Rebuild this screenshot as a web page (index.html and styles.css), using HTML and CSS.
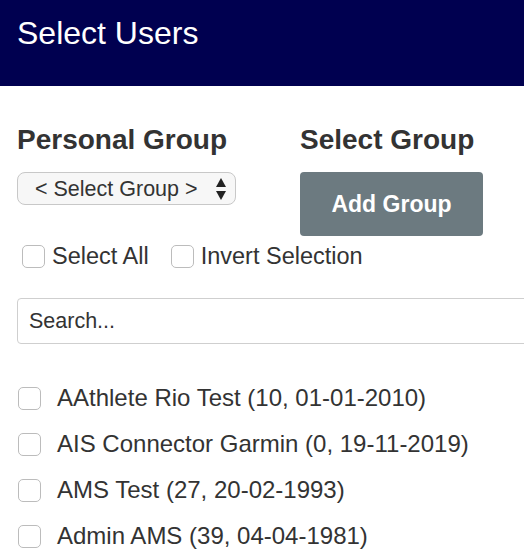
FILE: index.html
```html
<!DOCTYPE html>
<html lang="en">
<head>
  <meta charset="UTF-8" />
  <meta name="viewport" content="width=device-width, initial-scale=1.0" />
  <title>Select Users</title>
  <link rel="stylesheet" href="styles.css">
</head>
<body>

<header class="page--header">
  <h1 class="page--title">Select Users</h1>
</header>

<section class="picker">
  <div class="picker--groups">
    <div class="picker--col">
      <h3 class="picker--heading">Personal Group</h3>
      <div class="select-wrap">
        <select class="group-select">
          <option>&lt; Select Group &gt;</option>
        </select>
        <svg class="select-arrows" width="10" height="22" viewBox="0 0 10 22">
          <polygon points="5,0 10,9 0,9" fill="#222" />
          <polygon points="0,13 10,13 5,22" fill="#222" />
        </svg>
      </div>
    </div>
    <div class="picker--col">
      <h3 class="picker--heading">Select Group</h3>
      <button class="add-group">Add Group</button>
    </div>
  </div>

  <div class="picker--options">
    <label class="option"><input type="checkbox" class="check" /> Select All</label>
    <label class="option"><input type="checkbox" class="check" /> Invert Selection</label>
  </div>

  <input type="text" class="search" placeholder="Search..." />

  <ul class="user-list">
    <li class="user"><input type="checkbox" class="check" /> AAthlete Rio Test (10, 01-01-2010)</li>
    <li class="user"><input type="checkbox" class="check" /> AIS Connector Garmin (0, 19-11-2019)</li>
    <li class="user"><input type="checkbox" class="check" /> AMS Test (27, 20-02-1993)</li>
    <li class="user"><input type="checkbox" class="check" /> Admin AMS (39, 04-04-1981)</li>
  </ul>
</section>

</body>
</html>
```

FILE: styles.css
```css
html, body {
  overflow: hidden;
}

body {
  margin: 0;
  font-family: "Liberation Sans", Arial, sans-serif;
  color: #333;
  background-color: #fff;
}

.page--header {
  height: 86px;
  box-sizing: border-box;
  padding: 17px 0 0 17px;
  background-color: #000050;
}

.page--title {
  margin: 0;
  font-size: 32px;
  line-height: 32px;
  font-weight: normal;
  color: #fff;
}

.picker {
  padding: 40px 0 0 17px;
  overflow: hidden;
}

.picker--groups {
  display: grid;
  grid-template-columns: 283px auto;
}

.picker--heading {
  margin: 0 0 18px;
  font-size: 28px;
  line-height: 28px;
  font-weight: bold;
  color: #333;
}

.select-wrap {
  position: relative;
  width: 219px;
}

.group-select {
  appearance: none;
  -webkit-appearance: none;
  width: 219px;
  height: 33px;
  padding: 0 0 0 17px;
  border: 1px solid #c8c8c8;
  border-radius: 8px;
  background-color: #f7f7f7;
  font-family: "Liberation Sans", Arial, sans-serif;
  font-size: 21.5px;
  color: #333;
}

.select-arrows {
  position: absolute;
  left: 199px;
  top: 6px;
  pointer-events: none;
}

.add-group {
  width: 183px;
  height: 64px;
  border: none;
  border-radius: 4px;
  background-color: #6c7a80;
  color: #fff;
  font-family: "Liberation Sans", Arial, sans-serif;
  font-size: 23px;
  font-weight: bold;
  cursor: pointer;
}

.picker--options {
  display: flex;
  gap: 22px;
  margin: 8px 0 0 5px;
}

.option {
  display: flex;
  align-items: center;
  gap: 7px;
  font-size: 23.5px;
  line-height: 24px;
  color: #333;
}

.check {
  appearance: none;
  -webkit-appearance: none;
  flex: none;
  width: 23px;
  height: 23px;
  margin: 0;
  border: 1px solid #bcbcbc;
  border-radius: 5px;
  background-color: #fff;
  cursor: pointer;
}

.search {
  display: block;
  width: calc(100% + 8px);
  height: 46px;
  box-sizing: border-box;
  margin-top: 30px;
  padding: 0 11px;
  border: 1px solid #cfcfcf;
  border-radius: 4px;
  font-family: "Liberation Sans", Arial, sans-serif;
  font-size: 21.5px;
  color: #333;
}

.search::placeholder {
  color: #333;
}

.user-list {
  list-style: none;
  margin: 31px 0 0;
  padding: 0;
}

.user {
  display: flex;
  align-items: center;
  gap: 16px;
  height: 46px;
  padding-left: 1px;
  font-size: 24px;
  color: #333;
}
```
